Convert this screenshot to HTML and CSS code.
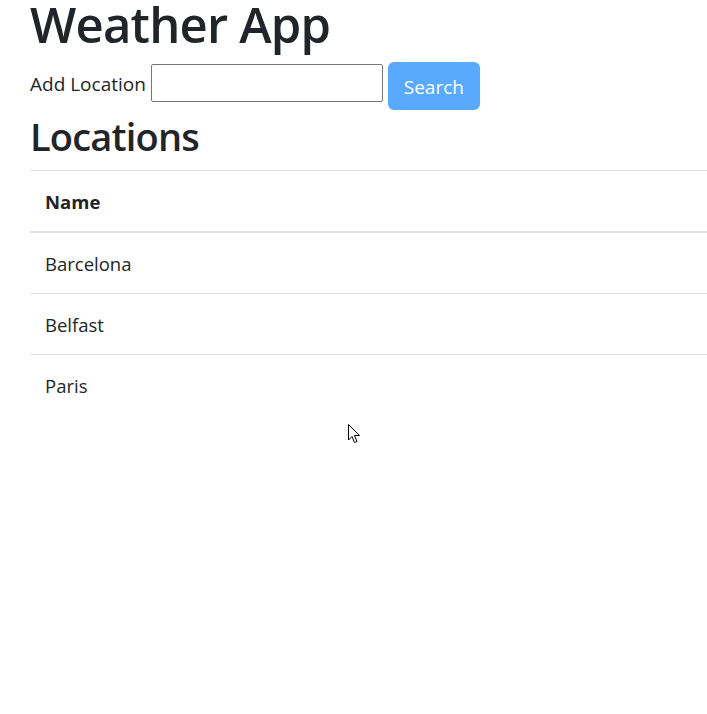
FILE: index.html
```html
<!DOCTYPE html>
<html lang="en">
<head>
<meta charset="utf-8">
<title>Weather App</title>
<link rel="stylesheet" href="styles.css">
</head>
<body>
<div class="page">
  <h1 class="title">Weather App</h1>
  <form class="add-form">
    <label class="add-label" for="loc">Add Location</label>
    <input class="add-input" id="loc" type="text">
    <button class="btn-search" type="button" disabled>Search</button>
  </form>
  <h2 class="subtitle">Locations</h2>
  <table class="loc-table">
    <thead>
      <tr><th>Name</th></tr>
    </thead>
    <tbody>
      <tr><td>Barcelona</td></tr>
      <tr><td>Belfast</td></tr>
      <tr><td>Paris</td></tr>
    </tbody>
  </table>
</div>
<svg class="cursor" width="13" height="20" viewBox="0 0 13 20"><path d="M0.5 0.5 L0.5 16 L4 12.5 L6.5 18.5 L9 17.5 L6.5 11.5 L11.5 11.5 Z" fill="#fff" stroke="#000" stroke-width="1" stroke-linejoin="round"/></svg>
</body>
</html>
```
FILE: styles.css
```css
html, body {
  margin: 0;
  padding: 0;
  background: #fff;
}
body {
  font-family: "Open Sans", "Noto Sans", sans-serif;
  color: #212529;
  font-size: 20px;
  line-height: 30px;
  overflow: hidden;
}
.page {
  padding-left: 30px;
}
.title {
  margin: 0;
  font-size: 49px;
  font-weight: 600;
  line-height: 48px;
  letter-spacing: -0.8px;
}
.add-form {
  display: flex;
  align-items: flex-start;
  margin-top: 14px;
  height: 48px;
}
.add-label {
  margin-top: 7px;
  margin-right: 5px;
  font-size: 19px;
}
.add-input {
  box-sizing: border-box;
  width: 232px;
  height: 38px;
  margin-top: 2px;
  border: 1px solid #767676;
  border-radius: 2px;
  padding: 0 4px;
  font-size: 16px;
}
.btn-search {
  box-sizing: border-box;
  margin-left: 5px;
  width: 92px;
  height: 48px;
  border: 0;
  border-radius: 6px;
  background: #59aaff;
  color: #fff;
  font-family: inherit;
  font-size: 19px;
  padding: 2px 0 0;
}
.subtitle {
  margin: 2px 0 10px;
  font-size: 38px;
  font-weight: 600;
  line-height: 48px;
  letter-spacing: -0.8px;
}
.loc-table {
  width: 100%;
  border-collapse: collapse;
}
.loc-table th,
.loc-table td {
  text-align: left;
  padding: 16px 15px 14px;
  line-height: 30px;
  border-top: 1px solid #dee2e6;
  font-size: 18.5px;
}
.loc-table th {
  font-weight: 700;
  border-bottom: 2px solid #dee2e6;
}
.cursor {
  position: absolute;
  left: 348px;
  top: 424px;
}
```
